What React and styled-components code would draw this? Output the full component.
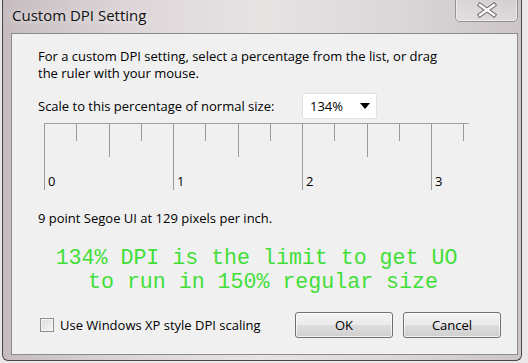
import React from 'react'
import styled, { createGlobalStyle } from 'styled-components'

const GlobalStyle = createGlobalStyle`
  html, body {
    margin: 0;
    padding: 0;
    background: #e9e7e7;
    font-family: "Open Sans", "Noto Sans", sans-serif;
  }
`

const Page = styled.div`
  width: 528px;
  height: 363px;
  overflow: hidden;
`

const Dialog = styled.div`
  margin-left: 2px;
  width: 518px;
  height: 360px;
  border: 1px solid #4a4648;
  border-top: none;
  border-radius: 0 0 6px 6px;
  background: linear-gradient(to right, #c6bcbf 0%, #ddd6d8 25%, #e7e3e3 50%, #dcd7d8 75%, #cbc5c7 100%);
  display: flex;
  flex-direction: column;
`

const TitleBar = styled.div`
  height: 33px;
  display: flex;
  align-items: flex-start;
  justify-content: space-between;
`

const Title = styled.div`
  padding: 5px 0 0 9px;
  font-size: 15px;
  color: #111;
  text-shadow: 0 0 6px rgba(255, 255, 255, 0.9);
`

const CloseButton = styled.div`
  width: 61px;
  height: 22px;
  margin-right: 3px;
  margin-top: -1px;
  border: 1px solid rgba(70, 60, 65, 0.45);
  border-top: none;
  border-radius: 0 0 5px 5px;
  box-shadow: inset 0 0 0 1px rgba(255, 255, 255, 0.45);
  background: linear-gradient(to bottom, rgba(255,255,255,0.15), rgba(255,255,255,0.35));
  display: flex;
  align-items: center;
  justify-content: center;
`

const Client = styled.div`
  margin: 0 3px 0 8px;
  height: 320px;
  background: #f0f0f0;
  border: 1px solid #8c8a8b;
  padding: 0 0 0 26px;
  display: flex;
  flex-direction: column;
  font-size: 13px;
  color: #000;
`

const Intro = styled.p`
  margin: 14px 0 0;
  line-height: 17px;
  width: 414px;
`

const ScaleRow = styled.div`
  margin-top: 11px;
  display: flex;
  align-items: center;
  height: 26px;
`

const ScaleLabel = styled.span`
  width: 264px;
`

const Select = styled.div`
  width: 75px;
  height: 26px;
  background: #fff;
  border: 1px solid #e2e2e2;
  border-radius: 2px;
  display: flex;
  align-items: center;
  justify-content: space-between;
  padding: 0 6px 0 7px;
  box-sizing: border-box;
  font-size: 13px;
`

const Arrow = styled.span`
  width: 0;
  height: 0;
  border-left: 5px solid transparent;
  border-right: 5px solid transparent;
  border-top: 6px solid #000;
`

const Ruler = styled.svg`
  display: block;
  margin: 4px 0 0 6px;
`

const Info = styled.div`
  margin-top: 16px;
`

const Note = styled.div`
  margin: 19px 0 0 17px;
  width: 403px;
  text-align: center;
  white-space: pre;
  font-family: "Liberation Mono", "DejaVu Sans Mono", monospace;
  font-size: 21.6px;
  line-height: 24px;
  color: #42de38;
`

const Footer = styled.div`
  margin-top: auto;
  margin-bottom: 16px;
  display: flex;
  align-items: center;
  padding-right: 16px;
`

const CheckLabel = styled.label`
  display: flex;
  align-items: center;
  gap: 6px;
  margin-left: 2px;
  flex: 1;
`

const CheckBox = styled.span`
  width: 12px;
  height: 12px;
  border: 1px solid #8e8f8f;
  background: linear-gradient(135deg, #dcdcdc, #f6f6f6);
  box-shadow: inset 0 0 0 1px #f4f4f4;
`

const Button = styled.button`
  width: 98px;
  height: 26px;
  margin-left: ${p => p.$gap || 0}px;
  border: 1px solid #707070;
  border-radius: 3px;
  background: linear-gradient(to bottom, #f2f2f2 0%, #ebebeb 50%, #dddddd 51%, #cfcfcf 100%);
  box-shadow: inset 0 0 0 1px rgba(255, 255, 255, 0.7);
  font-family: inherit;
  font-size: 13px;
  color: #000;
  padding: 0;
`

const ticks = Array.from({ length: 14 }, (_, i) => i)

const RulerDrawing = () => (
  <Ruler width="430" height="70" viewBox="0 0 430 70">
    <line x1="0" y1="0.5" x2="425" y2="0.5" stroke="#a3a3a3" />
    {ticks.map(i => {
      const x = Math.round(i * 32.25) + 0.5
      const len = i % 4 === 0 ? 67 : i % 2 === 0 ? 34 : 18
      return <line key={i} x1={x} y1="0" x2={x} y2={len} stroke="#9a9a9a" />
    })}
    {[0, 1, 2, 3].map(n => (
      <text key={n} x={Math.round(n * 129) + 4} y="63" fontSize="13" fill="#000"
        fontFamily='"Open Sans", sans-serif'>{n}</text>
    ))}
  </Ruler>
)

const CloseIcon = () => (
  <svg width="24" height="16" viewBox="0 0 24 16">
    <g strokeLinecap="square">
      <line x1="5" y1="3" x2="19" y2="13" stroke="#6e6a6c" strokeWidth="4.5" />
      <line x1="19" y1="3" x2="5" y2="13" stroke="#6e6a6c" strokeWidth="4.5" />
      <line x1="5" y1="3" x2="19" y2="13" stroke="#fafafa" strokeWidth="2.6" />
      <line x1="19" y1="3" x2="5" y2="13" stroke="#fafafa" strokeWidth="2.6" />
    </g>
  </svg>
)

export default function App() {
  return (
    <Page>
      <GlobalStyle />
      <Dialog>
        <TitleBar>
          <Title>Custom DPI Setting</Title>
          <CloseButton><CloseIcon /></CloseButton>
        </TitleBar>
        <Client>
          <Intro>
            For a custom DPI setting, select a percentage from the list, or drag the ruler with your mouse.
          </Intro>
          <ScaleRow>
            <ScaleLabel>Scale to this percentage of normal size:</ScaleLabel>
            <Select>134%<Arrow /></Select>
          </ScaleRow>
          <RulerDrawing />
          <Info>9 point Segoe UI at 129 pixels per inch.</Info>
          <Note>{'134% DPI is the limit to get UO\n to run in 150% regular size'}</Note>
          <Footer>
            <CheckLabel><CheckBox />Use Windows XP style DPI scaling</CheckLabel>
            <Button>OK</Button>
            <Button $gap={10}>Cancel</Button>
          </Footer>
        </Client>
      </Dialog>
    </Page>
  )
}
